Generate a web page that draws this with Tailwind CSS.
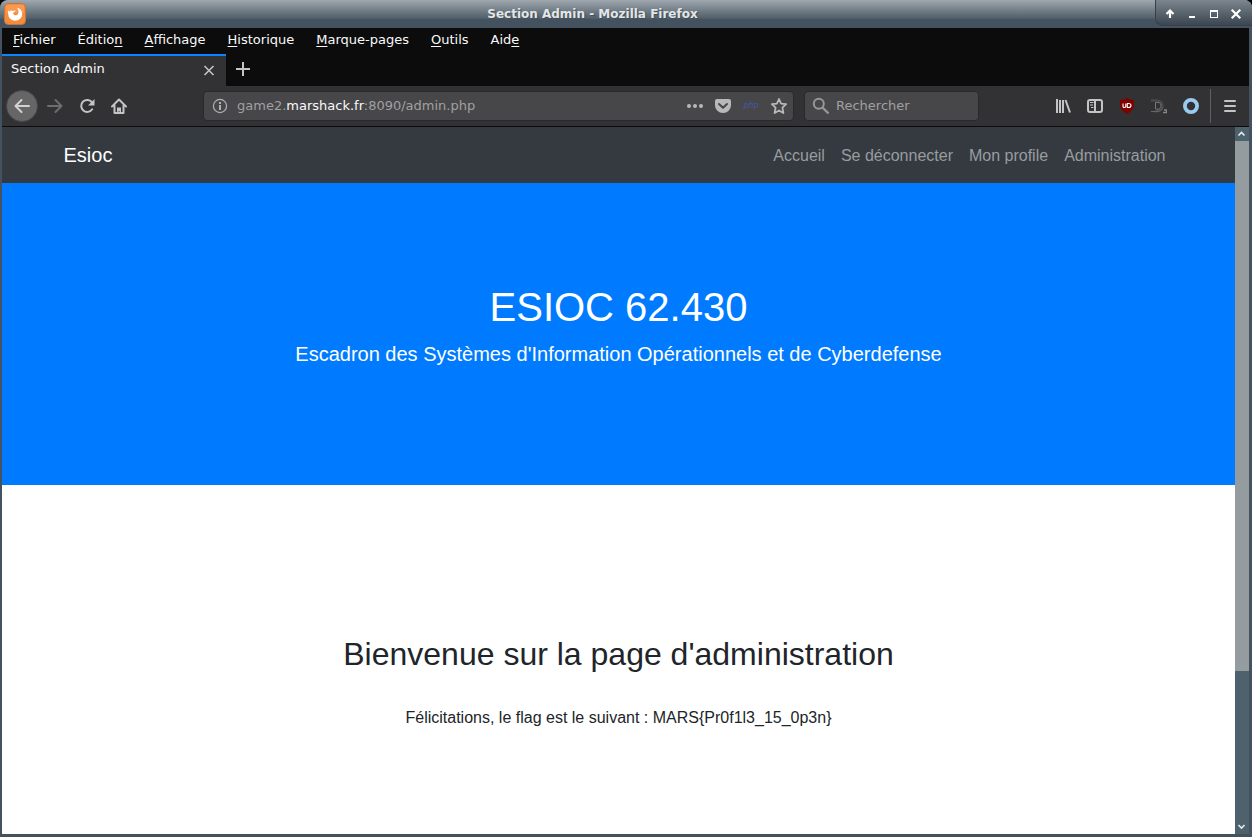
<!DOCTYPE html>
<html lang="fr">
<head>
<meta charset="utf-8">
<meta name="viewport" content="width=device-width, initial-scale=1">
<title>Section Admin</title>
<script src="https://cdn.jsdelivr.net/npm/@tailwindcss/browser@4"></script>
</head>
<body class="flex h-screen flex-col overflow-hidden bg-black font-['DejaVu_Sans',sans-serif] text-[13px] leading-5">
<div class="flex min-h-0 flex-1 flex-col rounded-t-lg bg-[#44525f]">
  <header class="flex h-7 shrink-0 items-center overflow-hidden rounded-t-lg bg-linear-to-b from-[#a0a8af] from-0% via-[#52606a] via-65% to-[#44525f] to-70%">
    <svg class="mx-1 size-[22px] shrink-0" viewBox="0 0 22 22" aria-hidden="true">
      <rect x=".5" y=".5" width="21" height="21" rx="4" fill="#f58b3c" stroke="#c8763d"/>
      <path d="M2 2h18v8H2z" fill="#fa9a50"/>
      <path d="M4.200 7.200 5.600 8.800 7 7.200l1.600.8 3-.8-.6 1.400-1.800.8.2 1.800c.9 1.100 3 1.400 4.200.2 1.600-1.500 1.200-4-.6-6.600 3.400.6 5.200 3.300 5.200 6.200a7 6.800 0 0 1-14 0c-.3-1.300-.2-2.500 0-3.800Z" fill="#fff"/>
    </svg>
    <h1 class="flex-1 text-center text-xs font-bold text-[#e2e6e9] [text-shadow:1px_1px_1px_#3f4b55]">Section Admin - Mozilla Firefox</h1>
    <div class="flex h-[26px] w-[97px] items-center gap-2 self-start rounded-bl-lg border-b border-l border-[#35404a] bg-linear-to-b from-[#7d868e] to-[#3b4650] pt-0.5 pl-[7px] text-white">
      <button type="button" aria-label="Enrouler" class="size-3.5"><svg viewBox="0 0 14 14" class="size-3.5"><path d="M7 11V5M3.500 7 7 3.500 10.500 7" fill="none" stroke="#fff" stroke-width="2.200"/></svg></button>
      <button type="button" aria-label="Réduire" class="size-3.5"><svg viewBox="0 0 14 14" class="size-3.5"><path d="M4 9h6v2H4z" fill="#fff"/></svg></button>
      <button type="button" aria-label="Agrandir" class="size-3.5"><svg viewBox="0 0 14 14" class="size-3.5"><path d="M3 3h8v8H3zm1 2v5h6V5z" fill="#fff" fill-rule="evenodd"/></svg></button>
      <button type="button" aria-label="Fermer la fenêtre" class="size-3.5"><svg viewBox="0 0 14 14" class="size-3.5"><path d="m3.500 3.500 7 7m0-7-7 7" stroke="#fff" stroke-width="2.200" stroke-linecap="square"/></svg></button>
    </div>
  </header>

  <div class="mr-[3px] mb-[3px] ml-0.5 flex min-h-0 flex-1 flex-col bg-[#0c0c0d]">
    <nav aria-label="Menu" class="flex h-[26px] shrink-0 items-center gap-[22px] pb-0.5 pl-[11px] text-[#f9f9fa]">
      <button type="button"><u class="underline-offset-2">F</u>ichier</button>
      <button type="button">Éditio<u class="underline-offset-2">n</u></button>
      <button type="button"><u class="underline-offset-2">A</u>ffichage</button>
      <button type="button"><u class="underline-offset-2">H</u>istorique</button>
      <button type="button"><u class="underline-offset-2">M</u>arque-pages</button>
      <button type="button"><u class="underline-offset-2">O</u>utils</button>
      <button type="button">Aid<u class="underline-offset-2">e</u></button>
    </nav>

    <div class="flex h-8 shrink-0">
      <div class="flex w-56 items-center justify-between border-t-2 border-[#0a84ff] bg-[#323234] pr-[11px] pl-[9px] text-[#f9f9fa]">
        <span class="pb-1">Section Admin</span>
        <button type="button" aria-label="Fermer l'onglet" class="size-3"><svg viewBox="0 0 12 12" class="size-3" stroke="#c4c4c5" stroke-width="1.600"><path d="m1.500 1 9 9m0-9-9 9"/></svg></button>
      </div>
      <button type="button" aria-label="Nouvel onglet" class="flex w-[34px] items-center justify-center pb-0.5"><svg viewBox="0 0 14 14" class="size-3.5" stroke="#c4c4c5" stroke-width="2"><path d="M7 0v14M0 7h14"/></svg></button>
    </div>

    <div class="flex h-[41px] shrink-0 items-center border-b border-[#0c0c0d] bg-[#323234] pl-1">
      <button type="button" aria-label="Précédent" class="flex size-8 items-center justify-center rounded-full border border-[#49494b] bg-[#666667]"><svg viewBox="0 0 16 16" class="size-4" fill="none" stroke="#d2d2d3" stroke-width="2" stroke-linecap="round" stroke-linejoin="round"><path d="M15 8H1.500M7.500 2l-6 6 6 6"/></svg></button>
      <div class="ml-px flex">
        <button type="button" aria-label="Suivant" class="flex size-8 items-center justify-center"><svg viewBox="0 0 16 16" class="size-4" fill="none" stroke="#6d6d6e" stroke-width="2" stroke-linecap="round" stroke-linejoin="round"><path d="M1 8h13.500M8.500 2l6 6-6 6"/></svg></button>
        <button type="button" aria-label="Actualiser" class="flex size-8 items-center justify-center"><svg viewBox="0 0 16 16" class="size-4" fill="none" stroke="#c4c4c5" stroke-width="2"><path d="M13.200 11.300A6 6 0 1 1 13 4.300" stroke-linecap="round"/><path d="M15.500 1v6.500H9z" fill="#c4c4c5" stroke="none"/></svg></button>
        <button type="button" aria-label="Accueil du navigateur" class="flex size-8 items-center justify-center"><svg viewBox="0 0 16 16" class="size-4" fill="none" stroke="#c4c4c5" stroke-width="2" stroke-linecap="round" stroke-linejoin="round"><path d="M1 8.500 8 1.500l7 7M3.500 7.500V15h9V7.500"/><path d="M6 15V9.500h4V15H8.500v-2h-1v2z" fill="#c4c4c5" stroke="none"/></svg></button>
      </div>

      <div class="ml-[68px] flex h-[30px] min-w-0 flex-1 items-center rounded border border-[#29292b] bg-[#474749] pr-1.5 pl-2">
        <svg viewBox="0 0 16 16" class="size-4 shrink-0" fill="none" stroke="#b1b1b3" stroke-width="1.200" aria-hidden="true"><circle cx="8" cy="8" r="6.600"/><path d="M8 7v5M8 4v2" stroke-width="2"/></svg>
        <a href="#" class="ml-[9px] flex-1 truncate text-[#a0a0a2]">game2.<span class="text-[#f9f9fa]">marshack.fr</span>:8090/admin.php</a>
        <div class="flex items-center gap-3">
          <button type="button" aria-label="Actions de la page"><svg viewBox="0 0 16 16" class="size-4" fill="#b8b8b9"><circle cx="2" cy="8" r="2"/><circle cx="8" cy="8" r="2"/><circle cx="14" cy="8" r="2"/></svg></button>
          <button type="button" aria-label="Enregistrer dans Pocket"><svg viewBox="0 0 16 16" class="size-4"><path d="M2 1h12a2 2 0 0 1 2 2v4.500a8 7.500 0 0 1-16 0V3a2 2 0 0 1 2-2Z" fill="#b8b8b9"/><path d="m4 6 4 3.800L12 6" fill="none" stroke="#474749" stroke-width="2" stroke-linecap="round" stroke-linejoin="round"/></svg></button>
          <button type="button" class="w-4 text-center text-[8px] leading-4 text-[#4557a0] italic">php</button>
          <button type="button" aria-label="Marquer cette page"><svg viewBox="0 0 16 16" class="size-4" fill="none" stroke="#b8b8b9" stroke-width="1.800" stroke-linejoin="round"><path d="m8 1 2.100 4.700 5 .5-3.700 3.500 1 5.300L8 12.400 3.600 15l1-5.300L.9 6.200l5-.5z"/></svg></button>
        </div>
      </div>

      <label class="ml-2.5 flex h-[30px] w-[175px] items-center rounded border border-[#29292b] bg-[#474749] pl-[7px]">
        <svg viewBox="0 0 18 18" class="size-[18px] shrink-0" fill="none" stroke="#97979a" stroke-width="2" aria-hidden="true"><circle cx="6.800" cy="6.800" r="5"/><path d="m10.500 10.500 6 6" stroke-width="2.400"/></svg>
        <input type="search" aria-label="Rechercher" placeholder="Rechercher" class="ml-1.5 w-32 bg-transparent text-[#f9f9fa] outline-none placeholder:text-[#a0a0a2]">
      </label>

      <div class="ml-[76px] flex shrink-0 items-center gap-4">
        <button type="button" aria-label="Bibliothèque"><svg viewBox="0 0 16 16" class="size-4" fill="none" stroke="#c4c4c5" stroke-width="2"><path d="M2 1v14M5 2v13M8 2v13M10.500 2l4.500 12.500"/></svg></button>
        <button type="button" aria-label="Panneau latéral"><svg viewBox="0 0 16 16" class="size-4" fill="none" stroke="#c4c4c5" stroke-width="2"><rect x="1" y="2" width="14" height="12" rx="2"/><path d="M8 2v12"/><path d="M3 4.500h3.500M3 7h3M4 9.500h2.500" stroke-width="1"/></svg></button>
        <button type="button" aria-label="Bloqueur de publicités"><svg viewBox="0 0 16 16" class="size-4"><path d="M8 0c2 1.200 4 2 7 2 0 7 0 10-7 14C1 12 1 9 1 2c3 0 5-.8 7-2Z" fill="#800000"/><path d="M4 5.500v3q0 1 1.200 1T6.800 8.500v-3m1.500 0v4h1.200q2.500 0 2.500-2t-2.500-2H8" fill="none" stroke="#fff" stroke-width="1.100"/></svg></button>
        <button type="button" aria-label="Téléchargement vidéo"><svg viewBox="0 0 16 16" class="size-4" fill="none"><path d="M0 2.500h4c5 0 7.500 1.500 7.500 5S9 13.500 4 13.500" stroke="#4a4a4b" stroke-width="2.400"/><path d="M4.500 4.500v6.500c4 1 5.500-1 5.500-3.500S8 4 4.500 4.500Z" stroke="#777" stroke-width="1"/><path d="M0 13.500h4.500c5 0 6.500-1.500 7.500-4" stroke="#686869" stroke-width="1"/><path d="M13 12h2.500v2.500H12" stroke="#858586" stroke-width="1.300"/></svg></button>
        <button type="button" aria-label="Cookies"><svg viewBox="0 0 16 16" class="size-4" fill="none" stroke="#99cbee" stroke-width="3.800"><circle cx="8" cy="8" r="6.100"/></svg></button>
      </div>
      <div class="ml-[11px] h-[34px] w-px bg-[#606062]"></div>
      <button type="button" aria-label="Ouvrir le menu" class="mr-[11px] ml-[11px]"><svg viewBox="0 0 16 16" class="size-4" stroke="#c4c4c5" stroke-width="2" stroke-linecap="round"><path d="M3 3h10M3 8h10M3 13h10"/></svg></button>
    </div>

    <div class="flex min-h-0 flex-1">
      <div class="min-w-0 flex-1 overflow-hidden bg-white font-['Liberation_Sans',sans-serif] text-base text-[#212529]">
        <nav aria-label="Navigation du site" class="h-14 bg-[#343a40]">
          <div class="mx-auto flex h-14 max-w-[1140px] items-center justify-between px-[15px]">
            <a href="#" class="text-xl text-white">Esioc</a>
            <ul class="flex pt-0.5 text-[#999c9f]">
              <li><a href="#" class="px-2">Accueil</a></li>
              <li><a href="#" class="px-2">Se déconnecter</a></li>
              <li><a href="#" class="px-2">Mon profile</a></li>
              <li><a href="#" class="px-2">Administration</a></li>
            </ul>
          </div>
        </nav>
        <div class="bg-[#007bff] pt-[100px] pb-[116px] text-center text-white">
          <h2 class="mb-2 text-[40px] leading-[48px]">ESIOC 62.430</h2>
          <p class="text-xl leading-[30px]">Escadron des Systèmes d'Information Opérationnels et de Cyberdefense</p>
        </div>
        <main class="py-[150px] text-center">
          <h2 class="mb-[33px] text-[32px] leading-[38px]">Bienvenue sur la page d'administration</h2>
          <p>Félicitations, le flag est le suivant : MARS{Pr0f1l3_15_0p3n}</p>
        </main>
      </div>
      <div class="flex w-3.5 shrink-0 flex-col bg-[#4d626d]">
        <button type="button" aria-label="Défiler vers le haut" class="h-3.5"><svg viewBox="0 0 14 14" class="size-3.5" fill="none" stroke="#e6eaec" stroke-width="1.600"><path d="m3.500 8.500 3-3 3 3"/></svg></button>
        <div class="flex-1"><div class="h-[78%] bg-[#949c9f]"></div></div>
        <button type="button" aria-label="Défiler vers le bas" class="h-3.5"><svg viewBox="0 0 14 14" class="size-3.5" fill="none" stroke="#e6eaec" stroke-width="1.600"><path d="m3.500 5 3 3 3-3"/></svg></button>
      </div>
    </div>
  </div>
</div>
</body>
</html>
